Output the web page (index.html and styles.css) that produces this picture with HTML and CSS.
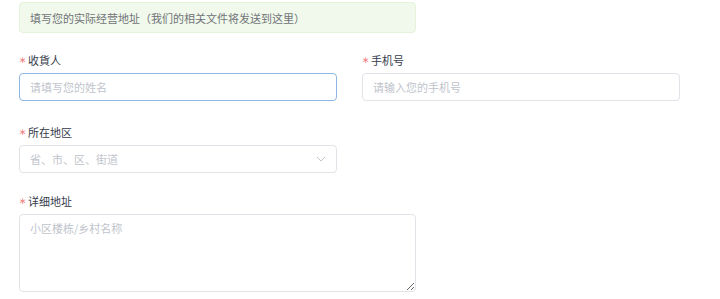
FILE: index.html
```html
<!DOCTYPE html>
<html lang="zh-CN">
<head>
<meta charset="utf-8">
<title>收货地址</title>
<link rel="stylesheet" href="styles.css">
</head>
<body>
<div class="page">
  <div class="alert">填写您的实际经营地址（我们的相关文件将发送到这里）</div>
  <div class="row">
    <div class="item">
      <div class="label"><span class="req">∗</span>收貨人</div>
      <div class="input focus"><span class="ph">请填写您的姓名</span></div>
    </div>
    <div class="item">
      <div class="label"><span class="req">∗</span>手机号</div>
      <div class="input"><span class="ph">请输入您的手机号</span></div>
    </div>
  </div>
  <div class="row row-2">
    <div class="item">
      <div class="label"><span class="req">∗</span>所在地区</div>
      <div class="input select"><span class="ph">省、市、区、街道</span>
        <svg class="chev" width="10" height="6" viewBox="0 0 10 6"><path d="M1 1 L5 5 L9 1" fill="none" stroke="#c0c4cc" stroke-width="1"/></svg>
      </div>
    </div>
  </div>
  <div class="row row-3">
    <div class="item wide">
      <div class="label"><span class="req">∗</span>详细地址</div>
      <textarea class="textarea" placeholder="小区楼栋/乡村名称"></textarea>
    </div>
  </div>
</div>
</body>
</html>
```
FILE: styles.css
```css
html, body {
  margin: 0;
  padding: 0;
  background: #fff;
}
body {
  font-family: "Noto Sans CJK SC", "Noto Sans", sans-serif;
  font-size: 11px;
  color: #303133;
}
.page {
  padding: 2px 0 0 19px;
}
.alert {
  box-sizing: border-box;
  width: 397px;
  height: 31px;
  background: #f0f9eb;
  border: 1px solid #e6f3dc;
  border-radius: 4px;
  padding: 0 10px;
  display: flex;
  align-items: center;
  color: #707378;
}
.row {
  display: flex;
  gap: 25px;
  margin-top: 17px;
}
.row-2 { margin-top: 21px; }
.row-3 { margin-top: 18px; }
.item {
  display: flex;
  flex-direction: column;
  width: 318px;
}
.item.wide { width: 397px; }
.label {
  height: 20px;
  line-height: 20px;
  margin-bottom: 3px;
  color: #363b4c;
  display: flex;
  align-items: center;
}
.req {
  color: #f07f7f;
  margin-right: 3px;
  font-family: "DejaVu Sans", sans-serif;
  font-size: 9px;
  line-height: 20px;
  width: 6px;
}
.input {
  box-sizing: border-box;
  height: 28px;
  border: 1px solid #e0e3e8;
  border-radius: 4px;
  padding: 0 10px;
  display: flex;
  align-items: center;
}
.input.focus {
  border-color: #8db6e3;
}
.ph {
  color: #c0c4cc;
}
.select {
  justify-content: space-between;
}
.textarea {
  box-sizing: border-box;
  width: 397px;
  height: 78px;
  border: 1px solid #e0e3e8;
  border-radius: 4px;
  padding: 5px 10px;
  font-family: "Noto Sans CJK SC", "Noto Sans", sans-serif;
  font-size: 11px;
  line-height: 16px;
  color: #606266;
  resize: both;
  outline: none;
  margin: 0;
}
.textarea::placeholder {
  color: #c0c4cc;
}
```
